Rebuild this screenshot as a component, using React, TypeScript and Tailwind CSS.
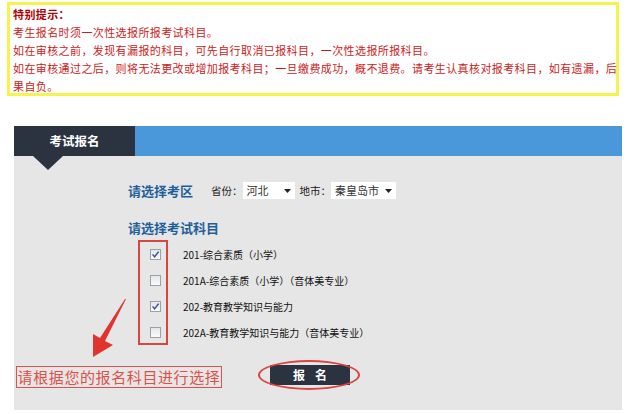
import React from "react"

const cjk = "font-['SimSun','Noto_Sans_CJK_SC',sans-serif]"

const subjects = [
    { label: "201-综合素质（小学）", checked: true },
    { label: "201A-综合素质（小学）（音体美专业）", checked: false },
    { label: "202-教育教学知识与能力", checked: true },
    { label: "202A-教育教学知识与能力（音体美专业）", checked: false },
]

const CheckBox = ({ checked }: { checked: boolean }) => (
    <span className="flex h-[11px] w-[11px] shrink-0 items-center justify-center border border-[#9aa1ab] bg-gradient-to-b from-[#e4e6ea] to-[#fbfbfb]">
        {checked ? (
            <svg width="9" height="9" viewBox="0 0 9 9">
                <path d="M1.6 4.4 L3.6 6.9 L7.6 1.6" fill="none" stroke="#3b4c9c" strokeWidth="1.5" />
            </svg>
        ) : null}
    </span>
)

const Select = ({ value, width }: { value: string, width: string }) => (
    <div className={`flex h-[17px] ${width} items-center justify-between bg-white pl-[4px] pr-[4px] text-[11px] leading-[17px] text-[#333]`}>
        <span>{value}</span>
        <svg width="7" height="4" viewBox="0 0 7 4"><path d="M0 0 H7 L3.5 4 Z" fill="#222" /></svg>
    </div>
)

const App = () => {
    return (
        <div className={`relative h-[414px] w-[640px] overflow-hidden bg-white ${cjk}`}>
            {/* notice box */}
            <div className="ml-[7px] mt-[2px] h-[94px] w-[612px] whitespace-nowrap border-[3px] border-[#f6f34c] pl-[3px] text-[11px] leading-[18px] tracking-[0.4px] text-[#cc1b1b]">
                <div className="font-bold text-[#b00000]">特别提示：</div>
                <div>考生报名时须一次性选报所报考试科目。</div>
                <div>如在审核之前，发现有漏报的科目，可先自行取消已报科目，一次性选报所报科目。</div>
                <div>如在审核通过之后，则将无法更改或增加报考科目；一旦缴费成功，概不退费。请考生认真核对报考科目，如有遗漏，后</div>
                <div>果自负。</div>
            </div>

            {/* panel */}
            <div className="ml-[14px] mt-[30px] w-[608px]">
                <div className="flex h-[30px] bg-[#4a98da]">
                    <div className="flex w-[121px] items-center justify-center bg-[#2c3340] text-[12.5px] font-bold text-white">考试报名</div>
                </div>
                <div className="relative h-[254px] bg-[#e6e6e6] pl-[114px]">
                    <div className="absolute left-[19px] top-0 h-0 w-0 border-l-[15px] border-r-[15px] border-t-[14px] border-l-transparent border-r-transparent border-t-[#2c3340]" />

                    <div className="flex items-center pt-[26px]">
                        <span className="text-[13px] font-bold leading-[17px] text-[#1f5f99]">请选择考区</span>
                        <span className="ml-[18px] text-[10.5px] text-[#222]">省份：</span>
                        <Select value="河北" width="w-[52px]" />
                        <span className="ml-[5px] text-[10.5px] text-[#222]">地市：</span>
                        <Select value="秦皇岛市" width="w-[65px]" />
                    </div>

                    <div className="mt-[20px] text-[13px] font-bold leading-[18px] text-[#1f5f99]">请选择考试科目</div>

                    <div className="mt-[4px] flex flex-col">
                        {subjects.map((s) => (
                            <div key={s.label} className="flex h-[26px] items-center pl-[22px]">
                                <CheckBox checked={s.checked} />
                                <span className="ml-[22px] text-[10px] text-[#111]">{s.label}</span>
                            </div>
                        ))}
                    </div>

                    <div className="-ml-[112px] mt-[20px] flex items-start">
                        <div className="mt-[1px] flex h-[22px] w-[206px] items-center justify-center border border-[#d9534f] text-[15px] leading-[20px] tracking-[0.6px] text-[#e0504a]">请根据您的报名科目进行选择</div>
                        <div className="ml-[48px] flex h-[20px] w-[80px] items-center justify-center gap-[10px] bg-[#2c3340] text-[12px] font-bold text-white">
                            <span>报</span>
                            <span>名</span>
                        </div>
                    </div>

                    {/* annotations */}
                    <div className="absolute left-[124px] top-[84px] h-[105px] w-[30px] border-2 border-[#d9453f]" />
                    <div className="absolute left-[244px] top-[204px] h-[30px] w-[102px] rounded-[50%] border-2 border-[#d9453f]" />
                </div>
            </div>

            <svg className="absolute left-[80px] top-[290px]" width="60" height="75" viewBox="80 290 60 75">
                <path d="M126 299 L105 341 L113 345 L93 357 L93 334 L100 338 L125 299 Z" fill="#e0342e" />
            </svg>
        </div>
    )
}

export default App
